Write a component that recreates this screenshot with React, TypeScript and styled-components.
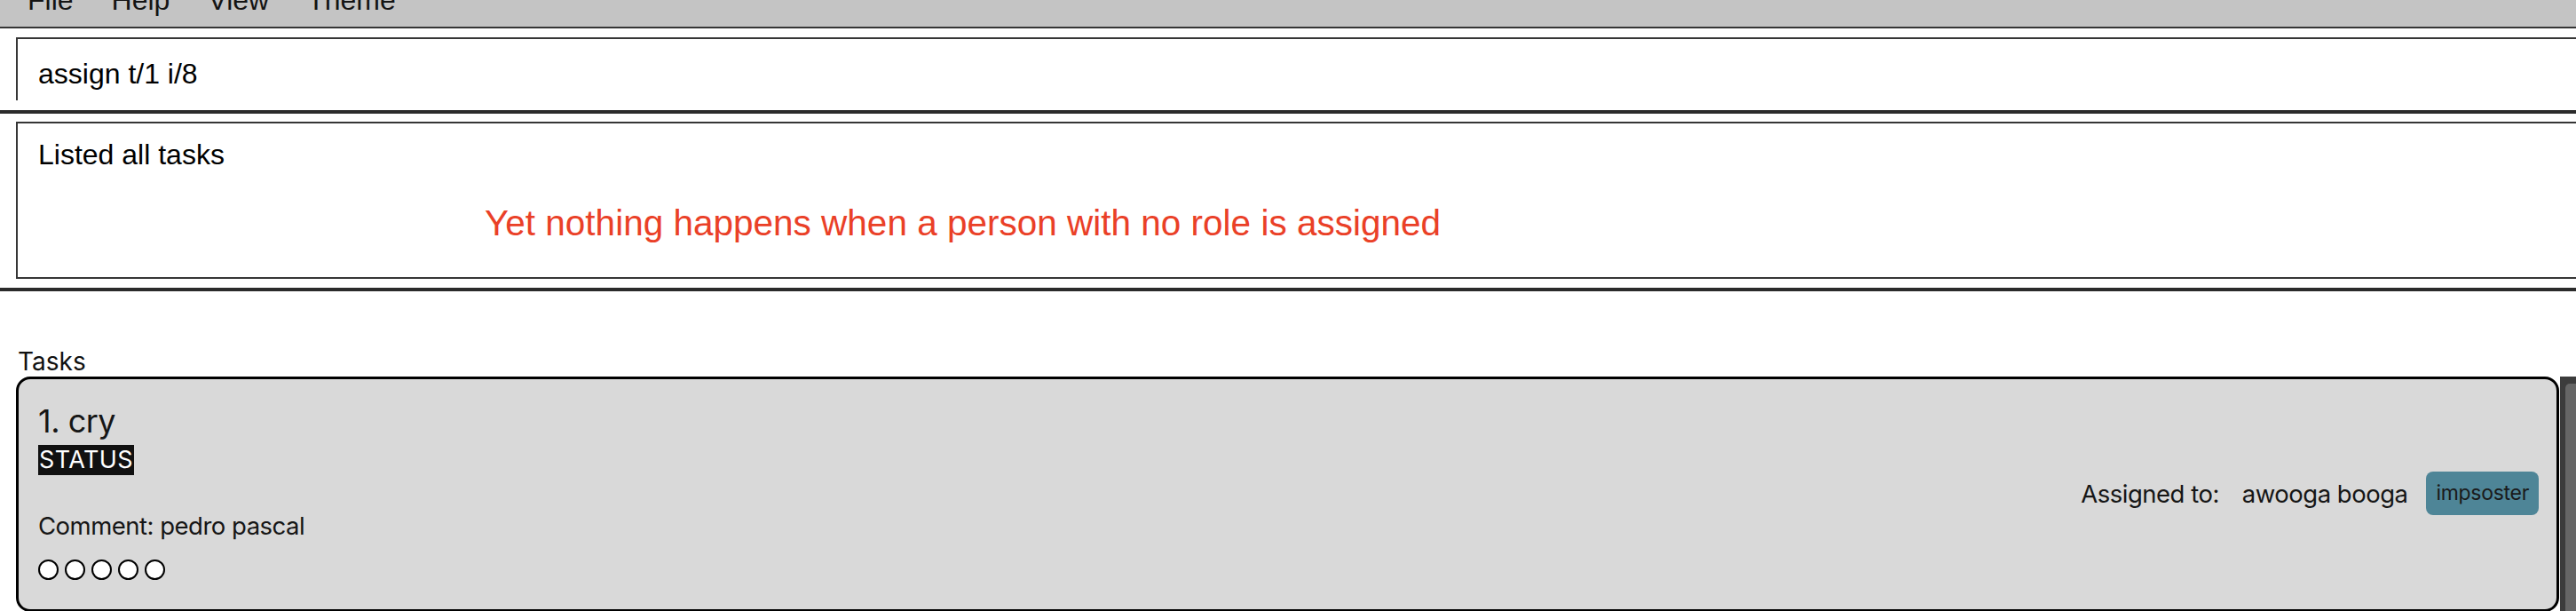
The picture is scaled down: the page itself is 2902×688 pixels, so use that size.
import React from 'react';
import styled, { createGlobalStyle } from 'styled-components';

const C = {
  menuBg: '#c4c4c4',
  line: '#363636',
  divider: '#2b2b2b',
  text: '#111111',
  cardBg: '#d9d9d9',
  tag: '#4e8597',
  red: '#ea4027',
  track: '#3c3c3c',
  thumb: '#666666',
} as const;

const GlobalStyle = createGlobalStyle`
  *, *::before, *::after { box-sizing: border-box; }
  html, body {
    margin: 0;
    padding: 0;
    background: #ffffff;
    overflow: hidden;
  }
  body {
    width: 2902px;
    height: 688px;
    font-family: "Liberation Sans", Arial, sans-serif;
    color: ${C.text};
  }
`;

const MenuBar = styled.nav`
  height: 32px;
  display: flex;
  align-items: flex-end;
  gap: 43px;
  padding-left: 31px;
  background: ${C.menuBg};
  border-bottom: 2px solid ${C.line};
  overflow: hidden;
`;

const MenuItem = styled.span`
  font-size: 32px;
  line-height: 36px;
  padding-bottom: 12px;
  color: #141414;
`;

const CommandPane = styled.section`
  padding: 10px 0 11px 18px;
`;

const CommandBox = styled.div`
  height: 71px;
  padding: 21px 0 0 23px;
  border-top: 2px solid ${C.line};
  border-left: 2px solid ${C.line};
  font-size: 32px;
  line-height: 36px;
  color: #000;
`;

const Divider = styled.div`
  height: 4px;
  background: ${C.divider};
`;

const ResultPane = styled.section`
  padding: 9px 0 10px 18px;
`;

const ResultBox = styled.div`
  height: 177px;
  padding: 17px 0 0 23px;
  border: 2px solid ${C.line};
  border-right: none;
`;

const ResultText = styled.div`
  font-size: 32px;
  line-height: 36px;
  color: #000;
`;

const Annotation = styled.div`
  margin: 36px 0 0 503px;
  font-size: 40.5px;
  line-height: 46px;
  color: ${C.red};
`;

const ListPane = styled.section`
  padding: 62px 0 0 18px;
  font-family: Inter, "Noto Sans", sans-serif;
`;

const ListLabel = styled.div`
  padding-left: 2px;
  font-size: 28px;
  line-height: 34px;
  color: #111;
`;

const ListRow = styled.div`
  display: flex;
  gap: 1px;
`;

const TaskCard = styled.article`
  flex: 1;
  display: flex;
  align-items: center;
  justify-content: space-between;
  padding: 26px 20px 33px 22px;
  background: ${C.cardBg};
  border: 3px solid #000;
  border-radius: 16px;
  color: #161616;
  letter-spacing: -0.5px;
`;

const TaskMain = styled.div`
  display: flex;
  flex-direction: column;
  align-items: flex-start;
`;

const TaskTitle = styled.div`
  font-size: 36px;
  line-height: 43px;
`;

const StatusLabel = styled.span`
  margin-top: 5px;
  padding: 0 1px;
  background: #111;
  color: #fff;
  font-size: 27px;
  line-height: 34px;
  letter-spacing: 0.4px;
`;

const Comment = styled.div`
  margin-top: 40px;
  font-size: 27.5px;
  line-height: 34px;
`;

const Dots = styled.div`
  display: flex;
  gap: 7px;
  margin-top: 21px;
`;

const Dot = styled.span`
  width: 23px;
  height: 23px;
  border: 2px solid #000;
  border-radius: 50%;
  background: #fff;
`;

const Assignees = styled.div`
  display: flex;
  align-items: center;
  margin-top: 5px;
  font-size: 27.5px;
  line-height: 34px;
`;

const AssignLabel = styled.span`
  margin-right: 26px;
`;

const PersonName = styled.span`
  margin-right: 21px;
`;

const RoleTag = styled.span`
  height: 49px;
  padding: 0 11px;
  border-radius: 8px;
  background: ${C.tag};
  color: #1a1a1a;
  font-size: 23px;
  line-height: 49px;
  letter-spacing: -0.3px;
`;

const ScrollTrack = styled.div`
  width: 18px;
  padding: 8px 0 0 6px;
  background: ${C.track};
`;

const ScrollThumb = styled.div`
  height: 100%;
  background: ${C.thumb};
  border-top-left-radius: 5px;
`;

const menus = ['File', 'Help', 'View', 'Theme'];

export default function App() {
  return (
    <>
      <GlobalStyle />
      <MenuBar>
        {menus.map((m) => (
          <MenuItem key={m}>{m}</MenuItem>
        ))}
      </MenuBar>

      <CommandPane>
        <CommandBox>assign t/1 i/8</CommandBox>
      </CommandPane>

      <Divider />

      <ResultPane>
        <ResultBox>
          <ResultText>Listed all tasks</ResultText>
          <Annotation>Yet nothing happens when a person with no role is assigned</Annotation>
        </ResultBox>
      </ResultPane>

      <Divider />

      <ListPane>
        <ListLabel>Tasks</ListLabel>
        <ListRow>
          <TaskCard>
            <TaskMain>
              <TaskTitle>1. cry</TaskTitle>
              <StatusLabel>STATUS</StatusLabel>
              <Comment>Comment: pedro pascal</Comment>
              <Dots>
                {[0, 1, 2, 3, 4].map((i) => (
                  <Dot key={i} />
                ))}
              </Dots>
            </TaskMain>
            <Assignees>
              <AssignLabel>Assigned to:</AssignLabel>
              <PersonName>awooga booga</PersonName>
              <RoleTag>impsoster</RoleTag>
            </Assignees>
          </TaskCard>
          <ScrollTrack>
            <ScrollThumb />
          </ScrollTrack>
        </ListRow>
      </ListPane>
    </>
  );
}
